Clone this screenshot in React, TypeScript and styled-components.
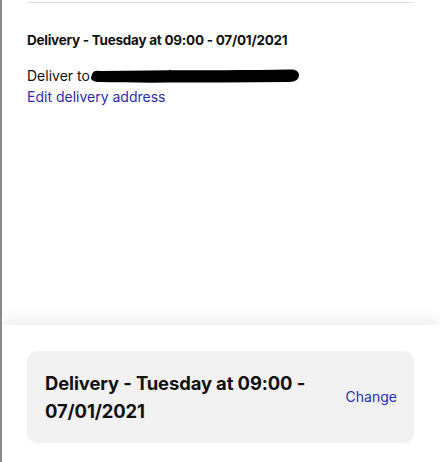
import React from "react";
import styled, { createGlobalStyle } from "styled-components";

const GlobalStyle = createGlobalStyle`
  html, body {
    margin: 0;
    padding: 0;
    background: #fff;
  }
  body {
    font-family: Inter, "Noto Sans", sans-serif;
    color: #111;
  }
`;

const Page = styled.div`
  height: 462px;
  border-left: 2px solid #8a8a8a;
  display: flex;
  flex-direction: column;
  box-sizing: border-box;
  overflow: hidden;
`;

const Content = styled.div`
  flex: 1;
  padding: 0 26px 0 25px;
`;

const Divider = styled.div`
  height: 1px;
  background: #e4e4e4;
  margin-top: 2px;
`;

const Heading = styled.h2`
  margin: 28px 0 0;
  font-size: 13.5px;
  font-weight: 700;
  line-height: 19px;
  letter-spacing: -0.25px;
`;

const AddressRow = styled.div`
  margin-top: 16px;
  display: flex;
  align-items: center;
  font-size: 14px;
  line-height: 20px;
`;

const Redaction = styled.svg`
  width: 210px;
  height: 16px;
  margin-top: -1px;
`;

const Link = styled.a<{ $size?: number }>`
  color: #2b2bb5;
  font-size: ${(p) => p.$size ?? 14}px;
  line-height: 20px;
  text-decoration: none;
  cursor: pointer;
`;

const Footer = styled.div`
  height: 137px;
  padding: 26px 26px 0 25px;
  box-sizing: border-box;
  background: #fff;
  box-shadow: 0 -6px 14px rgba(0, 0, 0, 0.07);
`;

const Card = styled.div`
  height: 92px;
  background: #f2f2f2;
  border-radius: 10px;
  display: flex;
  align-items: center;
  justify-content: space-between;
  padding: 0 17px 0 18px;
`;

const CardTitle = styled.div`
  font-size: 18.4px;
  font-weight: 700;
  line-height: 28px;
  max-width: 275px;
  letter-spacing: -0.1px;
`;

export default function App() {
  return (
    <>
      <GlobalStyle />
      <Page>
        <Content>
          <Divider />
          <Heading>Delivery - Tuesday at 09:00 - 07/01/2021</Heading>
          <AddressRow>
            Deliver to
            <Redaction viewBox="0 0 210 16">
              <path
                d="M2 6 C3 3 6 2 10 3 L60 2.5 C110 2 160 2.5 200 1.5 C206 1 209 4 209 7 C209 11 206 14 199 14 L130 14.5 C80 14.5 40 15 10 14 C4 14 1 12 1 10 C1 8 2 7 2 6 Z"
                fill="#000"
              />
            </Redaction>
          </AddressRow>
          <Link>Edit delivery address</Link>
        </Content>
        <Footer>
          <Card>
            <CardTitle>Delivery - Tuesday at 09:00 - 07/01/2021</CardTitle>
            <Link $size={14}>Change</Link>
          </Card>
        </Footer>
      </Page>
    </>
  );
}
